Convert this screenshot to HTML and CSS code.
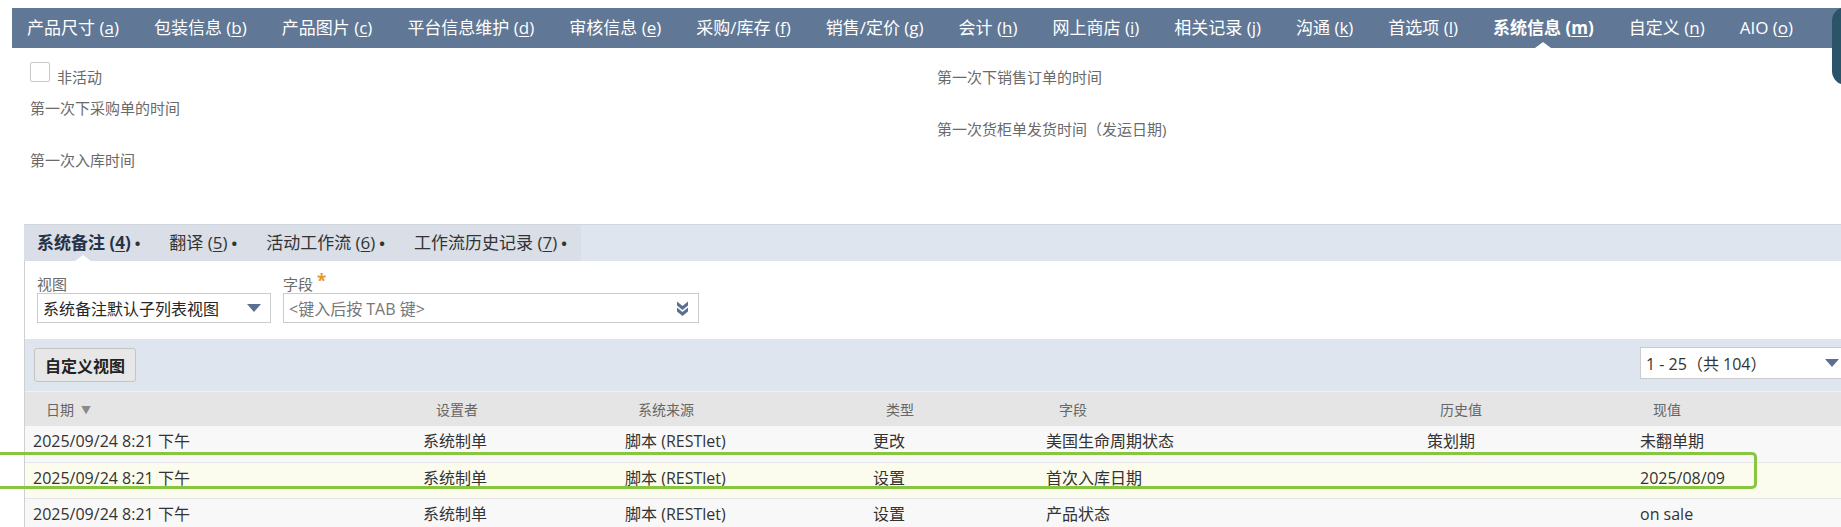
FILE: index.html
```html
<!DOCTYPE html>
<html lang="zh-CN">
<head>
<meta charset="utf-8">
<title>系统信息</title>
<link rel="stylesheet" href="styles.css">
</head>
<body>
<nav class="nav">
  <a class="nav-item">产品尺寸 (<u>a</u>)</a>
  <a class="nav-item">包装信息 (<u>b</u>)</a>
  <a class="nav-item">产品图片 (<u>c</u>)</a>
  <a class="nav-item">平台信息维护 (<u>d</u>)</a>
  <a class="nav-item">审核信息 (<u>e</u>)</a>
  <a class="nav-item">采购/库存 (<u>f</u>)</a>
  <a class="nav-item">销售/定价 (<u>g</u>)</a>
  <a class="nav-item">会计 (<u>h</u>)</a>
  <a class="nav-item">网上商店 (<u>i</u>)</a>
  <a class="nav-item">相关记录 (<u>j</u>)</a>
  <a class="nav-item">沟通 (<u>k</u>)</a>
  <a class="nav-item">首选项 (<u>l</u>)</a>
  <a class="nav-item active">系统信息 (<u>m</u>)</a>
  <a class="nav-item">自定义 (<u>n</u>)</a>
  <a class="nav-item">AIO (<u>o</u>)</a>
</nav>
<div class="side-widget"></div>

<section class="fields">
  <div class="col col-left">
    <div class="check-row">
      <span class="checkbox"></span>
      <span class="field-label check-label">非活动</span>
    </div>
    <div class="field"><span class="field-label">第一次下采购单的时间</span></div>
    <div class="field"><span class="field-label">第一次入库时间</span></div>
  </div>
  <div class="col col-right">
    <div class="field"><span class="field-label">第一次下销售订单的时间</span></div>
    <div class="field"><span class="field-label">第一次货柜单发货时间（发运日期)</span></div>
  </div>
</section>

<div class="subtabs">
  <div class="subtab-group">
    <span class="subtab active">系统备注 (<u>4</u>)<i class="dot">•</i></span>
    <span class="subtab">翻译 (<u>5</u>)<i class="dot">•</i></span>
    <span class="subtab">活动工作流 (<u>6</u>)<i class="dot">•</i></span>
    <span class="subtab">工作流历史记录 (<u>7</u>)<i class="dot">•</i></span>
  </div>
</div>

<div class="panel">
  <div class="filters">
    <div class="filter">
      <div class="filter-label">视图</div>
      <div class="select select-view">
        <span class="select-text">系统备注默认子列表视图</span>
        <span class="caret"></span>
      </div>
    </div>
    <div class="filter">
      <div class="filter-label">字段 <span class="req">*</span></div>
      <div class="select select-field">
        <span class="select-text placeholder">&lt;键入后按 TAB 键&gt;</span>
        <svg class="dbl-chevron" width="13" height="17" viewBox="0 0 13 17">
          <path d="M1 1.5 L6.5 6 L12 1.5 L12 5.5 L6.5 10 L1 5.5 Z" fill="#5b6f90"/>
          <path d="M1 7.5 L6.5 12 L12 7.5 L12 11.5 L6.5 16 L1 11.5 Z" fill="#5b6f90"/>
        </svg>
      </div>
    </div>
  </div>

  <div class="toolbar">
    <button class="btn">自定义视图</button>
    <div class="pager">
      <span>1 - 25（共 104）</span>
      <span class="caret"></span>
    </div>
  </div>

  <table class="notes">
    <colgroup>
      <col style="width:390px">
      <col style="width:202px">
      <col style="width:248px">
      <col style="width:173px">
      <col style="width:381px">
      <col style="width:213px">
      <col style="width:209px">
    </colgroup>
    <thead>
      <tr>
        <th>日期<span class="sort">▼</span></th>
        <th>设置者</th>
        <th>系统来源</th>
        <th>类型</th>
        <th>字段</th>
        <th>历史值</th>
        <th>现值</th>
      </tr>
    </thead>
    <tbody>
      <tr>
        <td>2025/09/24 8:21 下午</td>
        <td>系统制单</td>
        <td>脚本 (RESTlet)</td>
        <td>更改</td>
        <td>美国生命周期状态</td>
        <td>策划期</td>
        <td>未翻单期</td>
      </tr>
      <tr class="hover">
        <td>2025/09/24 8:21 下午</td>
        <td>系统制单</td>
        <td>脚本 (RESTlet)</td>
        <td>设置</td>
        <td>首次入库日期</td>
        <td></td>
        <td>2025/08/09</td>
      </tr>
      <tr>
        <td>2025/09/24 8:21 下午</td>
        <td>系统制单</td>
        <td>脚本 (RESTlet)</td>
        <td>设置</td>
        <td>产品状态</td>
        <td></td>
        <td>on sale</td>
      </tr>
    </tbody>
  </table>
</div>

<div class="highlight"></div>
</body>
</html>
```

FILE: styles.css
```css
html, body {
  margin: 0;
  padding: 0;
  overflow: hidden;
}

body {
  width: 1841px;
  height: 527px;
  position: relative;
  background: #ffffff;
  font-family: "Open Sans", "Noto Sans CJK SC", sans-serif;
  color: #333;
}

/* ---------- top navigation ---------- */
.nav {
  margin: 8px 0 0 12px;
  height: 40px;
  background: #607896;
  display: flex;
  align-items: center;
  padding-left: 15px;
  gap: 35px;
}

.nav-item {
  position: relative;
  color: #ffffff;
  font-size: 17px;
  line-height: 40px;
  white-space: nowrap;
}

.nav-item u {
  text-underline-offset: 2px;
}

.nav-item.active {
  font-weight: 700;
}

.nav-item.active::after {
  content: "";
  position: absolute;
  left: 50%;
  bottom: 0;
  margin-left: -8px;
  border-left: 8px solid transparent;
  border-right: 8px solid transparent;
  border-bottom: 6px solid #ffffff;
}

.side-widget {
  position: absolute;
  left: 1832px;
  top: 7px;
  width: 40px;
  height: 78px;
  background: #2b5468;
  border-radius: 14px;
}

/* ---------- main fields ---------- */
.fields {
  height: 176px;
  box-sizing: border-box;
  padding: 14px 0 0 30px;
  display: grid;
  grid-template-columns: 907px 1fr;
}

.field-label {
  font-size: 15px;
  line-height: 20px;
  color: #6a6a6a;
  white-space: nowrap;
}

.check-row {
  display: flex;
  align-items: flex-start;
  gap: 7px;
  height: 26px;
  margin-bottom: 9px;
}

.checkbox {
  width: 18px;
  height: 18px;
  border: 1px solid #c8c8c8;
  border-radius: 2px;
  background: #fff;
}

.check-label {
  margin-top: 5px;
}

.field {
  height: 52px;
}

.col-right {
  padding-top: 4px;
}

/* ---------- subtabs ---------- */
.subtabs {
  margin-left: 24px;
  height: 37px;
  box-sizing: border-box;
  border-top: 1px solid #d2d7df;
  background: #dfe5ef;
  display: flex;
}

.subtab-group {
  display: flex;
  align-items: center;
  gap: 29px;
  padding: 0 14px 0 13px;
  background: #d9dee7;
}

.subtab {
  position: relative;
  font-size: 17px;
  line-height: 36px;
  color: #333;
  white-space: nowrap;
}

.subtab u {
  text-underline-offset: 2px;
}

.subtab.active {
  font-weight: 700;
  color: #25324a;
}

.subtab.active::after {
  content: "";
  position: absolute;
  left: 50%;
  bottom: 0;
  margin-left: -14px;
  border-left: 8px solid transparent;
  border-right: 8px solid transparent;
  border-bottom: 6px solid #ffffff;
}

.dot {
  font-style: normal;
  font-weight: 700;
  font-size: 15px;
  margin-left: 4px;
  color: #333;
}

/* ---------- panel ---------- */
.panel {
  margin-left: 24px;
  border-left: 1px solid #d0d0d0;
}

.filters {
  height: 78px;
  box-sizing: border-box;
  padding: 14px 0 0 12px;
  display: flex;
  gap: 12px;
}

.filter-label {
  font-size: 15px;
  line-height: 18px;
  color: #6a6a6a;
}

.req {
  color: #e3962c;
  font-size: 17px;
  font-weight: 700;
  position: relative;
  top: -3px;
}

.select {
  height: 30px;
  box-sizing: border-box;
  border: 1px solid #cbcbcb;
  background: #fff;
  display: flex;
  align-items: center;
  padding: 0 9px 0 5px;
  font-size: 16px;
}

.select-view {
  width: 234px;
  color: #262626;
}

.select-field {
  width: 416px;
}

.select-text {
  flex: 1;
  white-space: nowrap;
}

.placeholder {
  color: #777;
}

.caret {
  width: 0;
  height: 0;
  border-left: 7px solid transparent;
  border-right: 7px solid transparent;
  border-top: 8px solid #5b6f90;
}

.dbl-chevron {
  margin-right: 0;
}

/* ---------- toolbar ---------- */
.toolbar {
  height: 52px;
  background: #dfe5ef;
  display: flex;
  align-items: center;
  justify-content: space-between;
  padding-left: 9px;
}

.btn {
  height: 34px;
  padding: 0 10px;
  font-family: "Open Sans", "Noto Sans CJK SC", sans-serif;
  font-size: 16px;
  font-weight: 700;
  color: #222;
  background: #e7e7e7;
  border: 1px solid #c4c4c4;
  border-radius: 3px;
}

.pager {
  width: 215px;
  height: 32px;
  box-sizing: border-box;
  margin-right: -14px;
  margin-top: -4px;
  border: 1px solid #cbcbcb;
  background: #fff;
  display: flex;
  align-items: center;
  justify-content: space-between;
  padding: 0 15px 0 5px;
  font-size: 16px;
  color: #333;
}

/* ---------- table ---------- */
.notes {
  width: 1816px;
  border-collapse: collapse;
  table-layout: fixed;
}

.notes th {
  height: 34px;
  padding: 0 0 0 21px;
  background: #e5e5e5;
  border-top: 1px solid #eef1f5;
  font-size: 14px;
  font-weight: 400;
  color: #666;
  text-align: left;
  white-space: nowrap;
}

.sort {
  font-size: 10px;
  color: #8a8a8a;
  margin-left: 7px;
  position: relative;
  top: -1px;
}

.notes tbody tr {
  height: 36px;
}

.notes td {
  padding: 5px 0 0 8px;
  vertical-align: top;
  line-height: 20px;
  background: #f8f8f8;
  border-bottom: 1px solid #e6e6e6;
  font-size: 16px;
  color: #333;
  white-space: nowrap;
}

.notes tr.hover td {
  background: #fbfcee;
}

/* ---------- annotation overlay ---------- */
.highlight {
  position: absolute;
  left: -10px;
  top: 452px;
  width: 1767px;
  height: 37px;
  box-sizing: border-box;
  border: 3px solid #88c640;
  border-radius: 5px;
}
```
